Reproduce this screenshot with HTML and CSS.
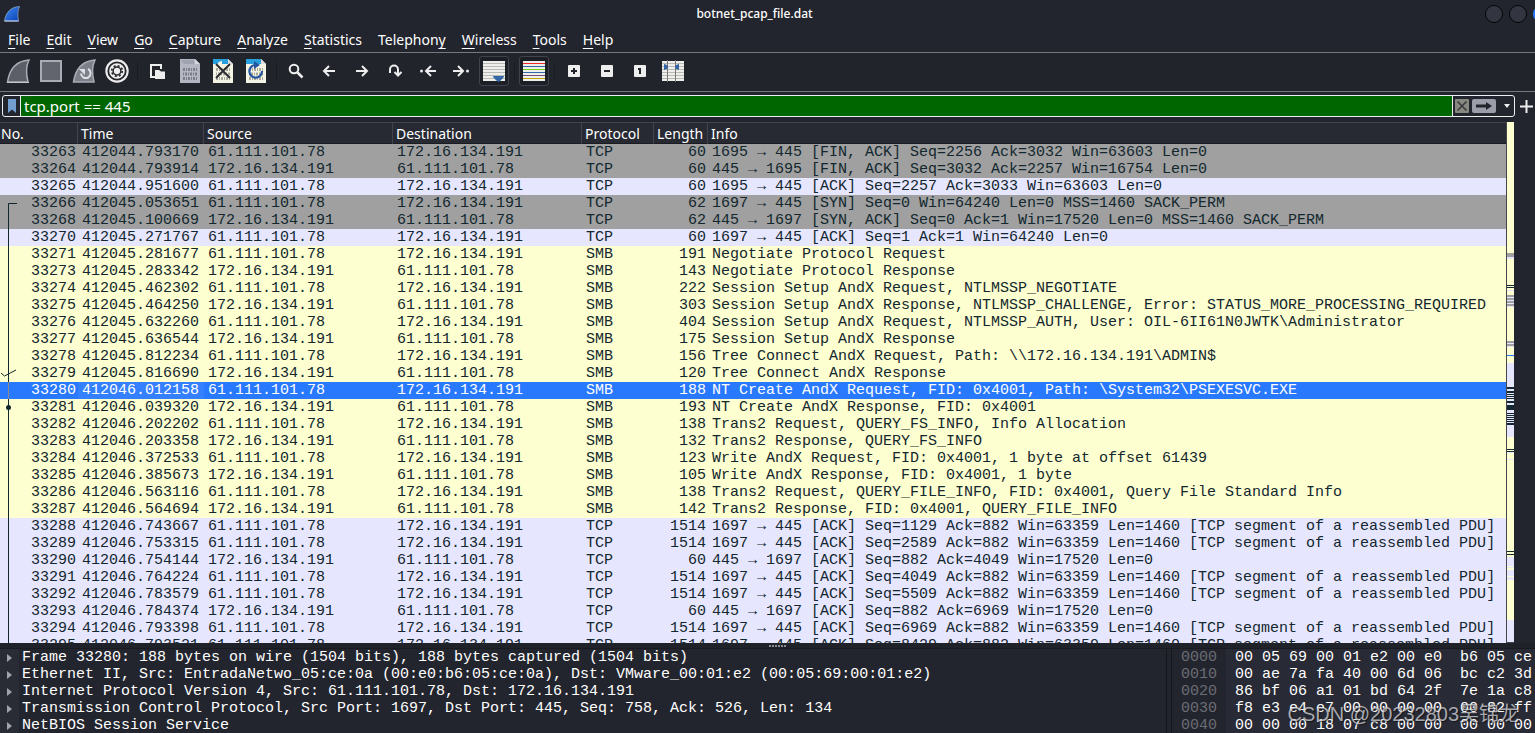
FILE: index.html
```html
<!DOCTYPE html>
<html lang="en">
<head>
<meta charset="utf-8">
<title>botnet_pcap_file.dat</title>
<link rel="stylesheet" href="styles.css">
</head>
<body>
<header class="titlebar">
  <svg class="logo" width="24" height="28" viewBox="0 0 24 28"><defs><linearGradient id="fin" x1="0" y1="0" x2="1" y2="1"><stop offset="0" stop-color="#3d8bf0"/><stop offset="1" stop-color="#0b3fb5"/></linearGradient></defs><path d="M4.500 21C6 12 11 7 19.500 6.500C17.500 10 17.500 16 18.500 21Z" fill="url(#fin)" stroke="#8fa6c8" stroke-width=".8"/><path d="M4.500 21H18.500" stroke="#c3d4f0"/></svg>
  <h1 class="title">botnet_pcap_file.dat</h1>
  <div class="controls"><button class="wbtn" aria-label="Minimize"></button><button class="wbtn" aria-label="Maximize"></button><button class="wbtn close" aria-label="Close"></button></div>
</header>
<nav class="menubar">
  <button><u>F</u>ile</button><button><u>E</u>dit</button><button><u>V</u>iew</button><button><u>G</u>o</button><button><u>C</u>apture</button><button><u>A</u>nalyze</button><button><u>S</u>tatistics</button><button>Telephon<u>y</u></button><button><u>W</u>ireless</button><button><u>T</u>ools</button><button><u>H</u>elp</button>
</nav>
<div class="toolbar" role="toolbar">
  <button aria-label="Start"><svg viewBox="0 0 32 32"><path d="M5.500 27C7.500 14 14 6 27 5C24 11 24 19 26 27Z" fill="#5c5e68" stroke="#a9abb5" stroke-width="1.500"/><path d="M5 27.500H27" stroke="#c5c7ce"/></svg></button>
  <button aria-label="Stop"><svg viewBox="0 0 32 32"><rect x="6" y="6" width="20" height="20" fill="#62646e" stroke="#a9abb5" stroke-width="2"/></svg></button>
  <button aria-label="Restart"><svg viewBox="0 0 32 32"><path d="M5.500 27C7.500 14 14 6 27 5C24 11 24 19 26 27Z" fill="#7d7f89" stroke="#a9abb5" stroke-width="1.500"/><path d="M20 14A4.800 4.800 0 1 1 13 18.500" fill="none" stroke="#e0e1e6" stroke-width="2"/><path d="M11 14H17V20Z" fill="#e0e1e6"/></svg></button>
  <button aria-label="Options"><svg viewBox="0 0 32 32"><circle cx="16" cy="16" r="11.700" fill="#eee"/><circle cx="16" cy="16" r="8.700" fill="none" stroke="#26272d" stroke-width="1.800"/><circle cx="16" cy="16" r="5.300" fill="none" stroke="#26272d" stroke-width="1.600" stroke-dasharray="2.080 2.080"/><circle cx="16" cy="16" r="3.900" fill="none" stroke="#26272d" stroke-width="1.500"/></svg></button>
  <span class="sep"></span>
  <button aria-label="Open"><svg viewBox="0 0 32 32"><path d="M10 22V10H20V14" fill="none" stroke="#eee" stroke-width="2"/><path d="M9 22H14" stroke="#eee" stroke-width="2"/><path d="M14 15H18L20 16.500H24V24H14Z" fill="#eee"/></svg></button>
  <button aria-label="Save"><svg viewBox="0 0 32 32"><path d="M6 4H21L26 9V28H6Z" fill="#b4b7c1"/><path d="M7 5H20V9H10Z" fill="#9fa3af"/><path d="M21 4V9H26Z" fill="#d5d7de"/><g fill="none" stroke="#7b7e89" stroke-width="3"><path d="M9 14.500H24" stroke-dasharray="2 1 1 1"/><path d="M9 19H24" stroke-dasharray="1 1 2 1"/><path d="M9 23.500H24" stroke-dasharray="2 1 1 1"/></g></svg></button>
  <button aria-label="Close file"><svg viewBox="0 0 32 32"><path d="M6 4H21L26 9V28H6Z" fill="#f5f4e4"/><path d="M6 4H21V9H6Z" fill="#28a0dd"/><path d="M10 10C11 7 13 6 15 6V10Z" fill="#f5f4e4"/><path d="M21 4V9H26Z" fill="#ddd"/><g fill="none" stroke="#aaa99d" stroke-width="3"><path d="M9 14.500H24" stroke-dasharray="2 1 1 1"/><path d="M9 19H24" stroke-dasharray="1 1 2 1"/><path d="M9 23.500H24" stroke-dasharray="2 1 1 1"/></g><path d="M9 9L23 23M23 9L9 23" stroke="#2b2d33" stroke-width="2"/></svg></button>
  <button aria-label="Reload"><svg viewBox="0 0 32 32"><path d="M6 4H21L26 9V28H6Z" fill="#f5f4e4"/><path d="M6 4H21V9H6Z" fill="#28a0dd"/><path d="M21 4V9H26Z" fill="#ddd"/><g fill="none" stroke="#aaa99d" stroke-width="3"><path d="M9 14.500H24" stroke-dasharray="2 1 1 1"/><path d="M9 19H24" stroke-dasharray="1 1 2 1"/><path d="M9 23.500H24" stroke-dasharray="2 1 1 1"/></g><path d="M22 16A6.300 6.300 0 1 1 15 10" fill="none" stroke="#24559f" stroke-width="2.200"/><path d="M14 6L20 10L14 14Z" fill="#24559f"/></svg></button>
  <span class="sep"></span>
  <button aria-label="Find"><svg viewBox="0 0 32 32" fill="none" stroke="#eee" stroke-width="2"><circle cx="14" cy="14" r="4.300"/><path d="M17.500 17.500L22.500 22.500" stroke-width="2.500"/></svg></button>
  <button aria-label="Back"><svg viewBox="0 0 32 32" fill="none" stroke="#eee" stroke-width="2"><path d="M22 16H11M16 11L11 16L16 21"/></svg></button>
  <button aria-label="Forward"><svg viewBox="0 0 32 32" fill="none" stroke="#eee" stroke-width="2"><path d="M10 16H21M16 11L21 16L16 21"/></svg></button>
  <button aria-label="Go to packet"><svg viewBox="0 0 32 32" fill="none" stroke="#eee" stroke-width="2"><path d="M11 18V14.500A4 4 0 0 1 19 14.500V20M15.500 17L19 20.500L22.500 17"/></svg></button>
  <button aria-label="First packet"><svg viewBox="0 0 32 32" fill="none" stroke="#eee" stroke-width="2"><path d="M24 16H14M19 11L14 16L19 21"/><circle cx="9.500" cy="16" r="1.500" fill="#eee" stroke="none"/></svg></button>
  <button aria-label="Last packet"><svg viewBox="0 0 32 32" fill="none" stroke="#eee" stroke-width="2"><path d="M8 16H18M13 11L18 16L13 21"/><circle cx="22.500" cy="16" r="1.500" fill="#eee" stroke="none"/></svg></button>
  <button class="on" aria-label="Auto scroll"><svg viewBox="0 0 32 32"><path d="M5 6H27V26H5Z" fill="#eeeeec"/><path d="M5 8.500H27M5 11.500H27M5 14.500H27M5 17.500H27M5 20.500H27M5 23.500H27" stroke="#b8bab5"/><path d="M15 21H26Q26 23 20.500 27Q15 23 15 21Z" fill="#3465a4"/></svg></button>
  <span class="sep"></span>
  <button class="on" aria-label="Colorize"><svg viewBox="0 0 32 32"><path d="M5 6H27V26H5Z" fill="#eeeeec"/><path d="M5 8.500H27" stroke="#ef2929"/><path d="M5 11.500H27M5 17.500H27" stroke="#3465a4"/><path d="M5 14.500H27" stroke="#73d216"/><path d="M5 20.500H27" stroke="#75507b"/><path d="M5 23.500H27" stroke="#c4a000"/></svg></button>
  <span class="sep"></span>
  <button aria-label="Zoom in"><svg viewBox="0 0 32 32"><rect x="10" y="10" width="12" height="12" rx="1" fill="#eee"/><path d="M13 16H19M16 13V19" stroke="#22242c" stroke-width="2"/></svg></button>
  <button aria-label="Zoom out"><svg viewBox="0 0 32 32"><rect x="10" y="10" width="12" height="12" rx="1" fill="#eee"/><path d="M13 16H19" stroke="#22242c" stroke-width="2"/></svg></button>
  <button aria-label="Normal size"><svg viewBox="0 0 32 32"><rect x="10" y="10" width="12" height="12" rx="1" fill="#eee"/><path d="M14 14H16V19" fill="none" stroke="#22242c" stroke-width="2"/></svg></button>
  <button aria-label="Resize columns"><svg viewBox="0 0 32 32"><path d="M5 6H27V26H5Z" fill="#eeeeec"/><path d="M5 8.500H27M5 11.500H27M5 14.500H27M5 17.500H27M5 20.500H27M5 23.500H27" stroke="#b8bab5"/><path d="M10.500 5V27M18.500 5V27" stroke="#777972"/><path d="M7 9Q11 10 11 12Q11 14 7 15ZM22 9Q18 10 18 12Q18 14 22 15Z" fill="#3465a4"/></svg></button>
</div>
<div class="filterbar">
  <div class="filter">
    <button class="mark" aria-label="Bookmarks"><svg width="8" height="14" viewBox="0 0 8 14"><path d="M0 0H8V14L4 10.500L0 14Z" fill="#729fcf"/></svg></button>
    <input class="expr" aria-label="Display filter" value="tcp.port == 445">
    <button class="clear" aria-label="Clear"><svg width="14" height="14" viewBox="0 0 14 14"><rect width="14" height="14" rx="1" fill="#87887f"/><path d="M2.500 2.500L11.500 11.500M11.500 2.500L2.500 11.500" stroke="#35373d" stroke-width="1.500"/></svg></button>
    <button class="apply" aria-label="Apply"><svg width="24" height="14" viewBox="0 0 24 14"><rect width="24" height="14" rx="2" fill="#9b9da8"/><path d="M4 5.500H14V3L20 7L14 11V8.500H4Z" fill="#22242c"/></svg></button>
    <button class="recent" aria-label="Recent filters"><svg width="6" height="4" viewBox="0 0 6 4"><path d="M0 0H6L3 4Z" fill="#eee"/></svg></button>
  </div>
  <button class="add" aria-label="Add filter"><svg width="13" height="13" viewBox="0 0 13 13"><path d="M0 6.500H13M6.500 0V13" stroke="#eee" stroke-width="2"/></svg></button>
</div>
<main class="packets">
  <div class="list">
  <table>
    <colgroup><col class="c-no"><col class="c-time"><col class="c-addr"><col class="c-addr"><col class="c-proto"><col class="c-len"><col></colgroup>
    <thead><tr><th>No.</th><th>Time</th><th>Source</th><th>Destination</th><th>Protocol</th><th>Length</th><th>Info</th></tr></thead>
    <tbody>
    <tr class="gray"><td>33263</td><td>412044.793170</td><td>61.111.101.78</td><td>172.16.134.191</td><td>TCP</td><td>60</td><td>1695 → 445 [FIN, ACK] Seq=2256 Ack=3032 Win=63603 Len=0</td></tr>
    <tr class="gray"><td>33264</td><td>412044.793914</td><td>172.16.134.191</td><td>61.111.101.78</td><td>TCP</td><td>60</td><td>445 → 1695 [FIN, ACK] Seq=3032 Ack=2257 Win=16754 Len=0</td></tr>
    <tr class="tcp"><td>33265</td><td>412044.951600</td><td>61.111.101.78</td><td>172.16.134.191</td><td>TCP</td><td>60</td><td>1695 → 445 [ACK] Seq=2257 Ack=3033 Win=63603 Len=0</td></tr>
    <tr class="gray"><td>33266</td><td>412045.053651</td><td>61.111.101.78</td><td>172.16.134.191</td><td>TCP</td><td>62</td><td>1697 → 445 [SYN] Seq=0 Win=64240 Len=0 MSS=1460 SACK_PERM</td></tr>
    <tr class="gray"><td>33268</td><td>412045.100669</td><td>172.16.134.191</td><td>61.111.101.78</td><td>TCP</td><td>62</td><td>445 → 1697 [SYN, ACK] Seq=0 Ack=1 Win=17520 Len=0 MSS=1460 SACK_PERM</td></tr>
    <tr class="tcp"><td>33270</td><td>412045.271767</td><td>61.111.101.78</td><td>172.16.134.191</td><td>TCP</td><td>60</td><td>1697 → 445 [ACK] Seq=1 Ack=1 Win=64240 Len=0</td></tr>
    <tr><td>33271</td><td>412045.281677</td><td>61.111.101.78</td><td>172.16.134.191</td><td>SMB</td><td>191</td><td>Negotiate Protocol Request</td></tr>
    <tr><td>33273</td><td>412045.283342</td><td>172.16.134.191</td><td>61.111.101.78</td><td>SMB</td><td>143</td><td>Negotiate Protocol Response</td></tr>
    <tr><td>33274</td><td>412045.462302</td><td>61.111.101.78</td><td>172.16.134.191</td><td>SMB</td><td>222</td><td>Session Setup AndX Request, NTLMSSP_NEGOTIATE</td></tr>
    <tr><td>33275</td><td>412045.464250</td><td>172.16.134.191</td><td>61.111.101.78</td><td>SMB</td><td>303</td><td>Session Setup AndX Response, NTLMSSP_CHALLENGE, Error: STATUS_MORE_PROCESSING_REQUIRED</td></tr>
    <tr><td>33276</td><td>412045.632260</td><td>61.111.101.78</td><td>172.16.134.191</td><td>SMB</td><td>404</td><td>Session Setup AndX Request, NTLMSSP_AUTH, User: OIL-6II61N0JWTK\Administrator</td></tr>
    <tr><td>33277</td><td>412045.636544</td><td>172.16.134.191</td><td>61.111.101.78</td><td>SMB</td><td>175</td><td>Session Setup AndX Response</td></tr>
    <tr><td>33278</td><td>412045.812234</td><td>61.111.101.78</td><td>172.16.134.191</td><td>SMB</td><td>156</td><td>Tree Connect AndX Request, Path: \\172.16.134.191\ADMIN$</td></tr>
    <tr><td>33279</td><td>412045.816690</td><td>172.16.134.191</td><td>61.111.101.78</td><td>SMB</td><td>120</td><td>Tree Connect AndX Response</td></tr>
    <tr class="sel"><td>33280</td><td>412046.012158</td><td>61.111.101.78</td><td>172.16.134.191</td><td>SMB</td><td>188</td><td>NT Create AndX Request, FID: 0x4001, Path: \System32\PSEXESVC.EXE</td></tr>
    <tr><td>33281</td><td>412046.039320</td><td>172.16.134.191</td><td>61.111.101.78</td><td>SMB</td><td>193</td><td>NT Create AndX Response, FID: 0x4001</td></tr>
    <tr><td>33282</td><td>412046.202202</td><td>61.111.101.78</td><td>172.16.134.191</td><td>SMB</td><td>138</td><td>Trans2 Request, QUERY_FS_INFO, Info Allocation</td></tr>
    <tr><td>33283</td><td>412046.203358</td><td>172.16.134.191</td><td>61.111.101.78</td><td>SMB</td><td>132</td><td>Trans2 Response, QUERY_FS_INFO</td></tr>
    <tr><td>33284</td><td>412046.372533</td><td>61.111.101.78</td><td>172.16.134.191</td><td>SMB</td><td>123</td><td>Write AndX Request, FID: 0x4001, 1 byte at offset 61439</td></tr>
    <tr><td>33285</td><td>412046.385673</td><td>172.16.134.191</td><td>61.111.101.78</td><td>SMB</td><td>105</td><td>Write AndX Response, FID: 0x4001, 1 byte</td></tr>
    <tr><td>33286</td><td>412046.563116</td><td>61.111.101.78</td><td>172.16.134.191</td><td>SMB</td><td>138</td><td>Trans2 Request, QUERY_FILE_INFO, FID: 0x4001, Query File Standard Info</td></tr>
    <tr><td>33287</td><td>412046.564694</td><td>172.16.134.191</td><td>61.111.101.78</td><td>SMB</td><td>142</td><td>Trans2 Response, FID: 0x4001, QUERY_FILE_INFO</td></tr>
    <tr class="tcp"><td>33288</td><td>412046.743667</td><td>61.111.101.78</td><td>172.16.134.191</td><td>TCP</td><td>1514</td><td>1697 → 445 [ACK] Seq=1129 Ack=882 Win=63359 Len=1460 [TCP segment of a reassembled PDU]</td></tr>
    <tr class="tcp"><td>33289</td><td>412046.753315</td><td>61.111.101.78</td><td>172.16.134.191</td><td>TCP</td><td>1514</td><td>1697 → 445 [ACK] Seq=2589 Ack=882 Win=63359 Len=1460 [TCP segment of a reassembled PDU]</td></tr>
    <tr class="tcp"><td>33290</td><td>412046.754144</td><td>172.16.134.191</td><td>61.111.101.78</td><td>TCP</td><td>60</td><td>445 → 1697 [ACK] Seq=882 Ack=4049 Win=17520 Len=0</td></tr>
    <tr class="tcp"><td>33291</td><td>412046.764224</td><td>61.111.101.78</td><td>172.16.134.191</td><td>TCP</td><td>1514</td><td>1697 → 445 [ACK] Seq=4049 Ack=882 Win=63359 Len=1460 [TCP segment of a reassembled PDU]</td></tr>
    <tr class="tcp"><td>33292</td><td>412046.783579</td><td>61.111.101.78</td><td>172.16.134.191</td><td>TCP</td><td>1514</td><td>1697 → 445 [ACK] Seq=5509 Ack=882 Win=63359 Len=1460 [TCP segment of a reassembled PDU]</td></tr>
    <tr class="tcp"><td>33293</td><td>412046.784374</td><td>172.16.134.191</td><td>61.111.101.78</td><td>TCP</td><td>60</td><td>445 → 1697 [ACK] Seq=882 Ack=6969 Win=17520 Len=0</td></tr>
    <tr class="tcp"><td>33294</td><td>412046.793398</td><td>61.111.101.78</td><td>172.16.134.191</td><td>TCP</td><td>1514</td><td>1697 → 445 [ACK] Seq=6969 Ack=882 Win=63359 Len=1460 [TCP segment of a reassembled PDU]</td></tr>
    <tr class="tcp"><td>33295</td><td>412046.793521</td><td>61.111.101.78</td><td>172.16.134.191</td><td>TCP</td><td>1514</td><td>1697 → 445 [ACK] Seq=8429 Ack=882 Win=63359 Len=1460 [TCP segment of a reassembled PDU]</td></tr>
    </tbody>
  </table>
  <svg class="related" width="20" height="521" viewBox="0 0 20 521" fill="none" stroke="#12272e"><path d="M17 81.500H8.500V521"/><path d="M8.500 260V277" stroke="#8a8a8a"/><circle cx="8.500" cy="285.500" r="2.500" fill="#12272e" stroke="none"/><path d="M1 251L4.500 254L16 248"/></svg>
  </div>
  <svg class="minimap" viewBox="0 122 7 521" preserveAspectRatio="none" shape-rendering="crispEdges">
    <path fill="#feffd0" d="M0 122H7V643H0Z"/>
    <path fill="#e7e6ff" d="M0 257H7V259H0ZM0 290H7V291H0ZM0 295H7V307H0ZM0 341H7V347H0ZM0 363H7V437H0ZM0 452H7V453H0ZM0 459H7V460H0ZM0 557H7V566H0ZM0 567H7V568H0ZM0 570H7V576H0ZM0 577H7V580H0ZM0 620H7V642H0Z"/>
    <path fill="#a0a0a0" d="M0 253H7V257H0ZM0 295H7V297H0ZM0 298H7V300H0ZM0 301H7V303H0ZM0 304H7V306H0ZM0 341H7V343H0ZM0 344H7V346H0Z"/>
    <path fill="#2979ff" d="M0 355H7V356H0Z"/>
    <path fill="#12272e" d="M0 285H7V286H0ZM0 287H7V288H0ZM0 387H7V389H0ZM0 391H7V393H0ZM0 394H7V395H0ZM0 396H7V397H0ZM0 398H7V399H0ZM0 401H7V403H0ZM0 405H7V410H0ZM0 413H7V414H0ZM0 415H7V416H0ZM0 417H7V418H0ZM0 419H7V420H0ZM0 421H7V422H0ZM0 423H7V425H0ZM0 449H7V450H0ZM0 451H7V452H0ZM0 551H7V552H0ZM0 554H7V555H0Z"/>
    <path fill="#45464b" d="M0 642H7V643H0Z"/>
  </svg>
</main>
<div class="splitter"><i></i><i></i><i></i><i></i><i></i><i></i></div>
<section class="details">
  <ul class="tree">
    <li>Frame 33280: 188 bytes on wire (1504 bits), 188 bytes captured (1504 bits)</li>
    <li>Ethernet II, Src: EntradaNetwo_05:ce:0a (00:e0:b6:05:ce:0a), Dst: VMware_00:01:e2 (00:05:69:00:01:e2)</li>
    <li>Internet Protocol Version 4, Src: 61.111.101.78, Dst: 172.16.134.191</li>
    <li>Transmission Control Protocol, Src Port: 1697, Dst Port: 445, Seq: 758, Ack: 526, Len: 134</li>
    <li>NetBIOS Session Service</li>
  </ul>
  <div class="hex">
    <pre class="offsets">0000
0010
0020
0030
0040</pre>
    <pre class="bytes">00 05 69 00 01 e2 00 e0  b6 05 ce
00 ae 7a fa 40 00 6d 06  bc c2 3d
86 bf 06 a1 01 bd 64 2f  7e 1a c8
f8 e3 e4 e7 00 00 00 00  00 82 ff
00 00 00 18 07 c8 00 00  00 00 00</pre>
  </div>
  <span class="watermark">CSDN @20232803吴锦龙</span>
</section>
</body>
</html>
```

FILE: styles.css
```css
* { box-sizing: border-box; }
body {
  margin: 0;
  height: 100vh;
  display: flex;
  flex-direction: column;
  overflow: hidden;
  background: #23252e;
  color: #fff;
  font: 14px/20px "Noto Sans", sans-serif;
}
button { margin: 0; padding: 0; border: 0; background: none; color: inherit; font: inherit; }
svg { display: block; }

.titlebar { display: flex; height: 28px; flex: none; }
.title { flex: 1; margin: 0; text-align: center; font-size: 12px; font-weight: 500; line-height: 28px; }
.controls { display: flex; width: 50px; gap: 6px; align-items: center; overflow: hidden; }
.wbtn { flex: none; width: 18px; height: 18px; border: 1px solid #050608; border-radius: 50%; background: #333641; }
.wbtn.close { background: #2979ff; border-color: #2979ff; }

.menubar { display: flex; flex: none; height: 25px; border-bottom: 1px solid #77787d; }
.menubar button { padding: 0 8px; line-height: 24px; }
.menubar u { text-decoration-thickness: 1px; text-underline-offset: 3px; }

.toolbar { display: flex; flex: none; align-items: center; height: 39px; padding: 0 0 2px 2px; border-bottom: 1px solid #77787d; background: #22242c; }
.toolbar button { display: flex; align-items: center; justify-content: center; flex: none; width: 32px; height: 30px; margin-right: 1px; border-radius: 3px; }
.toolbar svg { flex: none; width: 32px; height: 32px; }
.toolbar .on { width: 30px; margin: 0 2px 0 1px; border: 1px solid #40434b; background: #1d1f26; }
.sep { flex: none; width: 1px; height: 18px; margin: 0 3px; background: #1a1c22; }

.filterbar { display: flex; flex: none; align-items: center; height: 30px; padding: 0 2px 2px 2px; }
.filter { display: flex; flex: 1; align-items: center; height: 22px; border: 1px solid #eee; border-radius: 3px; }
.mark { display: flex; justify-content: center; align-items: center; width: 18px; height: 20px; border-right: 1px solid #eee; }
.expr { flex: 1; min-width: 0; height: 20px; padding: 0 3px; border: 0; border-right: 1px solid #eee; background: #060; color: #fff; font: 15px/20px "Noto Sans", sans-serif; outline: 0; }
.clear { margin: 0 3px 0 2px; }
.recent { width: 18px; padding-left: 8px; }
.add { margin-left: 5px; }

.packets { display: flex; flex: none; height: 521px; max-height: 72%; }
.list { position: relative; flex: 1; min-width: 0; overflow: hidden; border-right: 1px solid #45464b; background: #feffd0; }
.packets table { width: 100%; border-collapse: collapse; table-layout: fixed; }
.c-no { width: 78px; }
.c-time { width: 126px; }
.c-addr { width: 189px; }
.c-proto { width: 72px; }
.c-len { width: 54px; }
.packets th { height: 22px; padding: 2px 0 0 3px; border: 0; background: #272a33; box-shadow: inset -1px 0 #41444d, inset 0 1px #41444d, inset 0 -1px #1a1c22; text-align: left; font-weight: 400; line-height: 20px; white-space: nowrap; }
.packets th:first-child { padding-left: 1px; }
.packets th:last-child { box-shadow: inset 0 1px #41444d, inset 0 -1px #1a1c22; }
.packets td { height: 17px; padding: 0 0 0 4px; overflow: hidden; color: #12272e; font: 15px/17px "Liberation Mono", monospace; white-space: pre; }
.packets td:nth-child(1), .packets td:nth-child(6) { padding: 0 2px 0 0; text-align: right; }
.gray { background: #a0a0a0; }
.tcp { background: #e7e6ff; }
.sel { background: #2979ff; }
.packets .sel td { color: #fff; }
.packets .sel td:nth-child(2) { background: #3580ff; }
.related { position: absolute; left: 0; top: 0; }
.minimap { flex: none; width: 7px; height: 100%; margin-right: 21px; }

.splitter { display: flex; flex: none; justify-content: center; align-items: center; gap: 1px; height: 5px; padding-left: 20px; background: #202229; }
.splitter i { width: 2px; height: 2px; background: #8a8b90; }

.details { position: relative; display: flex; flex: 1; min-height: 0; overflow: hidden; border-top: 1px solid #1a1b21; font: 15px/17px "Liberation Mono", monospace; }
.tree { flex: 1; min-width: 0; margin: 0 4px 0 0; padding: 0; border-right: 1px solid #15161a; list-style: none; background: linear-gradient(90deg, #292b35 19px, #23252e 19px); white-space: nowrap; }
.tree li { display: flex; align-items: center; gap: 10px; height: 17px; padding-left: 7px; }
.tree li::before { content: ""; border: solid transparent; border-width: 4px 0 4px 5px; border-left-color: #a2a3a8; }
.hex { display: flex; flex: none; width: 364px; background: #282a35; border-left: 1px solid #15161a; }
.hex pre { margin: 0; font: inherit; }
.offsets { width: 54px; padding-left: 9px; background: #23252e; color: #6b6d74; }
.bytes { padding-left: 9px; }
.watermark { position: absolute; right: 16px; bottom: 7px; color: rgba(215, 215, 220, .75); font: 20px/24px "Liberation Sans", "Noto Sans CJK SC", sans-serif; text-shadow: 1px 1px 1px rgba(0, 0, 0, .5); }
```
